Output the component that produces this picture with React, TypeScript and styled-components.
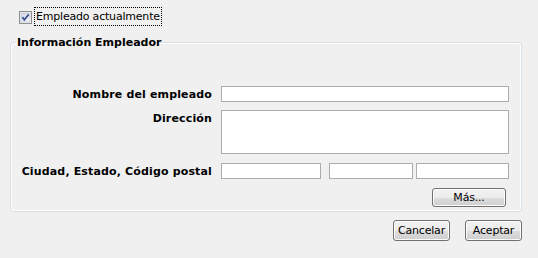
import styled, { createGlobalStyle } from "styled-components";

const GlobalStyle = createGlobalStyle`
  html, body {
    margin: 0;
    padding: 0;
    background: #f0f0f0;
  }
  body {
    font-family: "DejaVu Sans", "Liberation Sans", sans-serif;
    font-size: 11px;
    color: #000;
  }
`;

const Page = styled.div`
  width: 538px;
  height: 258px;
  box-sizing: border-box;
  padding: 7px 0 0 10px;
  display: flex;
  flex-direction: column;
`;

const CheckRow = styled.label`
  display: flex;
  align-items: center;
  margin-left: 9px;
  height: 19px;
`;

const CheckBox = styled.svg`
  display: block;
  margin-top: 2px;
  margin-right: 2px;
`;

const FocusText = styled.span`
  border: 1px dotted #000;
  padding: 2px 1px;
  line-height: 13px;
  letter-spacing: -0.2px;
`;

const GroupBox = styled.div`
  position: relative;
  margin-top: 16px;
  width: 512px;
  height: 170px;
  box-sizing: border-box;
  border: 1px solid #d5dfe5;
  border-radius: 3px;
  box-shadow: inset 0 0 0 1px #fff;
  padding-top: 43px;
  display: flex;
  flex-direction: column;
`;

const GroupTitle = styled.span`
  position: absolute;
  top: -7px;
  left: 5px;
  padding: 0 1px;
  background: #f0f0f0;
  font-weight: bold;
  line-height: 13px;
`;

const Row = styled.div<{ $gap?: number; $top?: boolean }>`
  display: flex;
  align-items: ${(p) => (p.$top ? "flex-start" : "center")};
  margin-top: ${(p) => p.$gap ?? 0}px;
`;

const Label = styled.div<{ $offset?: number }>`
  width: 201px;
  margin-right: 9px;
  text-align: right;
  font-weight: bold;
  letter-spacing: 0.15px;
  line-height: 13px;
  margin-top: ${(p) => p.$offset ?? 0}px;
  white-space: nowrap;
`;

const Field = styled.input<{ $w: number; $ml?: number }>`
  display: block;
  width: ${(p) => p.$w}px;
  height: 16px;
  box-sizing: border-box;
  margin: 0 0 0 ${(p) => p.$ml ?? 0}px;
  border: 1px solid #abadb3;
  background: #fff;
  padding: 0 2px;
  font: inherit;
`;

const Area = styled.textarea`
  display: block;
  width: 288px;
  height: 44px;
  box-sizing: border-box;
  margin: 0;
  border: 1px solid #abadb3;
  background: #fff;
  resize: none;
  font: inherit;
`;

const Fields = styled.div`
  display: flex;
  width: 288px;
`;

const Button = styled.button<{ $w: number; $h: number }>`
  width: ${(p) => p.$w}px;
  height: ${(p) => p.$h}px;
  box-sizing: border-box;
  margin: 0;
  padding: 0;
  border: 1px solid #707070;
  border-radius: 3px;
  background: linear-gradient(#f2f2f2 0%, #ebebeb 50%, #dddddd 51%, #cfcfcf 100%);
  box-shadow: inset 0 0 0 1px #fcfcfc;
  font-family: "DejaVu Sans", "Liberation Sans", sans-serif;
  font-size: 11px;
  letter-spacing: -0.2px;
  color: #000;
  line-height: 13px;
`;

const ButtonCell = styled.div`
  width: 288px;
  display: flex;
  justify-content: flex-end;
  padding-right: 3px;
  box-sizing: border-box;
`;

const Footer = styled.div`
  width: 512px;
  margin-top: 8px;
  display: flex;
  justify-content: flex-end;
  gap: 15px;
`;

const CheckIcon = () => (
  <CheckBox width="13" height="13" viewBox="0 0 13 13">
    <defs>
      <linearGradient id="cb" x1="0" y1="0" x2="1" y2="1">
        <stop offset="0" stopColor="#d3d9e4" />
        <stop offset="1" stopColor="#f5f6f8" />
      </linearGradient>
    </defs>
    <rect x="0.5" y="0.5" width="12" height="12" fill="#f4f4f4" stroke="#8e8f8f" />
    <rect x="2" y="2" width="9" height="9" fill="url(#cb)" stroke="#b4bccb" strokeWidth="0.6" />
    <path d="M3.4 6.1 L5.4 8.8 L9.7 3.4" fill="none" stroke="#3f5592" strokeWidth="1.8" />
  </CheckBox>
);

export default function App() {
  return (
    <>
      <GlobalStyle />
      <Page>
        <CheckRow>
          <CheckIcon />
          <FocusText>Empleado actualmente</FocusText>
        </CheckRow>
        <GroupBox>
          <GroupTitle>Información Empleador</GroupTitle>
          <Row>
            <Label>Nombre del empleado</Label>
            <Field $w={288} />
          </Row>
          <Row $gap={8} $top>
            <Label $offset={2}>Dirección</Label>
            <Area />
          </Row>
          <Row $gap={9}>
            <Label>Ciudad, Estado, Código postal</Label>
            <Fields>
              <Field $w={100} />
              <Field $w={84} $ml={8} />
              <Field $w={93} $ml={3} />
            </Fields>
          </Row>
          <Row $gap={9}>
            <Label />
            <ButtonCell>
              <Button $w={74} $h={19}>Más...</Button>
            </ButtonCell>
          </Row>
        </GroupBox>
        <Footer>
          <Button $w={57} $h={21}>Cancelar</Button>
          <Button $w={57} $h={21}>Aceptar</Button>
        </Footer>
      </Page>
    </>
  );
}
